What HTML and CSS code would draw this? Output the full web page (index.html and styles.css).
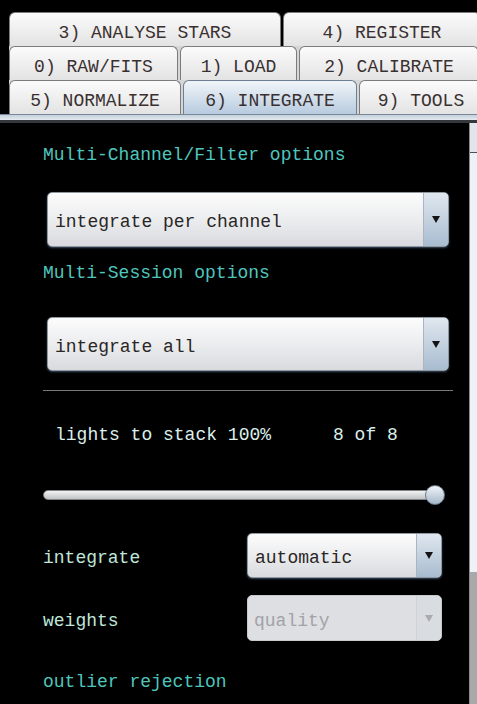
FILE: index.html
```html
<!DOCTYPE html>
<html lang="en">
<head>
    <meta charset="UTF-8">
    <meta name="viewport" content="width=device-width, initial-scale=1.0">
    <title>Integrate</title>
    <link rel="stylesheet" href="styles.css">
</head>
<body>
    <div class="tabs">
        <div class="tab-row">
            <div class="tab tab-analyse">3) ANALYSE STARS</div>
            <div class="tab tab-register">4) REGISTER</div>
        </div>
        <div class="tab-row behind">
            <div class="tab tab-raw">0) RAW/FITS</div>
            <div class="tab tab-load">1) LOAD</div>
            <div class="tab tab-calibrate">2) CALIBRATE</div>
        </div>
        <div class="tab-row behind">
            <div class="tab tab-normalize">5) NORMALIZE</div>
            <div class="tab tab-integrate active">6) INTEGRATE</div>
            <div class="tab tab-tools">9) TOOLS</div>
        </div>
    </div>
    <div class="tab-strip"></div>

    <div class="main">
        <div class="panel">
            <p class="section-title">Multi-Channel/Filter options</p>
            <div class="combo combo-wide first">
                <span class="combo-value">integrate per channel</span>
                <span class="combo-arrow"></span>
            </div>

            <p class="section-title session">Multi-Session options</p>
            <div class="combo combo-wide second">
                <span class="combo-value">integrate all</span>
                <span class="combo-arrow"></span>
            </div>

            <div class="divider"></div>

            <div class="stack-info">
                <span class="stack-label">lights to stack 100%</span>
                <span>8 of 8</span>
            </div>

            <div class="slider">
                <div class="slider-track"></div>
                <div class="slider-thumb"></div>
            </div>

            <div class="field-row integrate-row">
                <span class="field-label">integrate</span>
                <div class="combo combo-small">
                    <span class="combo-value">automatic</span>
                    <span class="combo-arrow"></span>
                </div>
            </div>
            <div class="field-row weights-row">
                <span class="field-label">weights</span>
                <div class="combo combo-small disabled">
                    <span class="combo-value">quality</span>
                    <span class="combo-arrow"></span>
                </div>
            </div>

            <p class="section-title outlier">outlier rejection</p>
        </div>
        <div class="scrollbar"></div>
    </div>
</body>
</html>
```

FILE: styles.css
```css
html, body {
    height: 100%;
}
body {
    margin: 0;
    background: #000;
    font-family: "Liberation Mono", "DejaVu Sans Mono", monospace;
    font-size: 18px;
    overflow: hidden;
    display: flex;
    flex-direction: column;
}

/* tab rows */
.tabs {
    padding-top: 12px;
}
.tab-row {
    display: flex;
    gap: 2px;
    height: 34px;
    padding-left: 9px;
    overflow: hidden;
}
.tab-row.behind {
    background: #d6d6d6;
    background-clip: content-box;
}
.tab {
    flex: none;
    box-sizing: border-box;
    height: 34px;
    padding-top: 9px;
    line-height: 22px;
    border: 1px solid #7b7b7b;
    border-bottom: 0;
    border-radius: 6px 6px 0 0;
    background: linear-gradient(#fbfbfb, #e3e3e3);
    color: #3a3030;
    text-align: center;
    white-space: nowrap;
}
.tab.active {
    background: linear-gradient(#f1f5f9, #b7cbdf);
    border-color: #6d7f92;
}
.tab-analyse { width: 272px; }
.tab-register { width: 198px; }
.tab-raw { width: 169px; }
.tab-load { width: 117px; }
.tab-calibrate { width: 180px; }
.tab-normalize { width: 172px; }
.tab-integrate { width: 174px; }
.tab-tools { width: 124px; }

.tab-strip {
    height: 5px;
    border-top: 1px solid #7a8998;
    border-bottom: 3px solid #34383d;
    background: linear-gradient(#c3cfdb, #e5eaf0);
}

/* main panel */
.main {
    flex: 1;
    display: flex;
}
.panel {
    width: 469px;
    box-sizing: border-box;
    padding: 21px 0 0 43px;
}
.scrollbar {
    width: 7px;
    border-left: 1px solid #8b8b8b;
    background: linear-gradient(#e2e6ec 0 29px, #4b5159 29px 30px, #eef2f6 30px 449px, #a9a9ab 449px);
}

.section-title {
    margin: 0;
    line-height: 22px;
    color: #4fc6bd;
}
.section-title.session { margin-top: 15px; }
.section-title.outlier { margin-top: 30px; }

/* combo boxes */
.combo {
    display: flex;
    box-sizing: border-box;
    border: 1px solid #8f979f;
    border-radius: 5px;
    background: linear-gradient(#fcfcfc, #eaebed 55%, #d9dade);
    box-shadow: 0 1px 2px rgba(80, 105, 140, 0.7);
    overflow: hidden;
}
.combo-value {
    flex: 1;
    align-self: center;
    padding: 5px 0 0 7px;
    line-height: 22px;
    color: #2a2626;
    white-space: nowrap;
}
.combo-arrow {
    width: 24px;
    display: flex;
    align-items: center;
    justify-content: center;
    border-left: 1px solid #aab5c0;
    background: linear-gradient(#e0e7ef, #a8bcd0);
}
.combo-arrow::before {
    content: "";
    border-left: 4px solid transparent;
    border-right: 4px solid transparent;
    border-top: 7px solid #141414;
}
.combo-wide {
    width: 402px;
    margin-left: 4px;
}
.combo-wide.first {
    margin-top: 26px;
    height: 55px;
}
.combo-wide.second {
    margin-top: 33px;
    height: 54px;
}
.combo-small {
    width: 195px;
}
.combo.disabled {
    border-color: #c7c9cd;
    background: #dedfe3;
    box-shadow: none;
}
.combo.disabled .combo-value {
    color: #a2a2a8;
    padding-left: 6px;
}
.combo.disabled .combo-arrow {
    border-left-color: #cfd2d6;
    background: #d9dce1;
}
.combo.disabled .combo-arrow::before {
    border-top-color: #a9abb1;
}

.divider {
    width: 410px;
    margin-top: 19px;
    border-top: 1px solid #7a7a7a;
}

.stack-info {
    display: flex;
    margin-top: 33px;
    padding-left: 12px;
    line-height: 22px;
    color: #dbefeb;
}
.stack-label {
    width: 278px;
}

/* slider */
.slider {
    display: flex;
    align-items: center;
    width: 402px;
    height: 20px;
    margin-top: 39px;
}
.slider-track {
    width: 392px;
    height: 10px;
    box-sizing: border-box;
    border: 1px solid #7e8388;
    border-radius: 5px;
    background: linear-gradient(#f2f2f2, #c0c2c5);
}
.slider-thumb {
    width: 20px;
    height: 20px;
    margin-left: -10px;
    box-sizing: border-box;
    border: 1px solid #6b7b8b;
    border-radius: 50%;
    background: linear-gradient(#f0f4f8, #a5b8cb);
}

/* label + combo rows */
.field-row {
    display: flex;
    align-items: center;
}
.field-label {
    width: 204px;
    padding-top: 5px;
    line-height: 22px;
    color: #bfe7d9;
}
.integrate-row {
    margin-top: 28px;
    height: 45px;
}
.weights-row {
    margin-top: 17px;
    height: 46px;
}
.field-row .combo {
    height: 100%;
}
```
